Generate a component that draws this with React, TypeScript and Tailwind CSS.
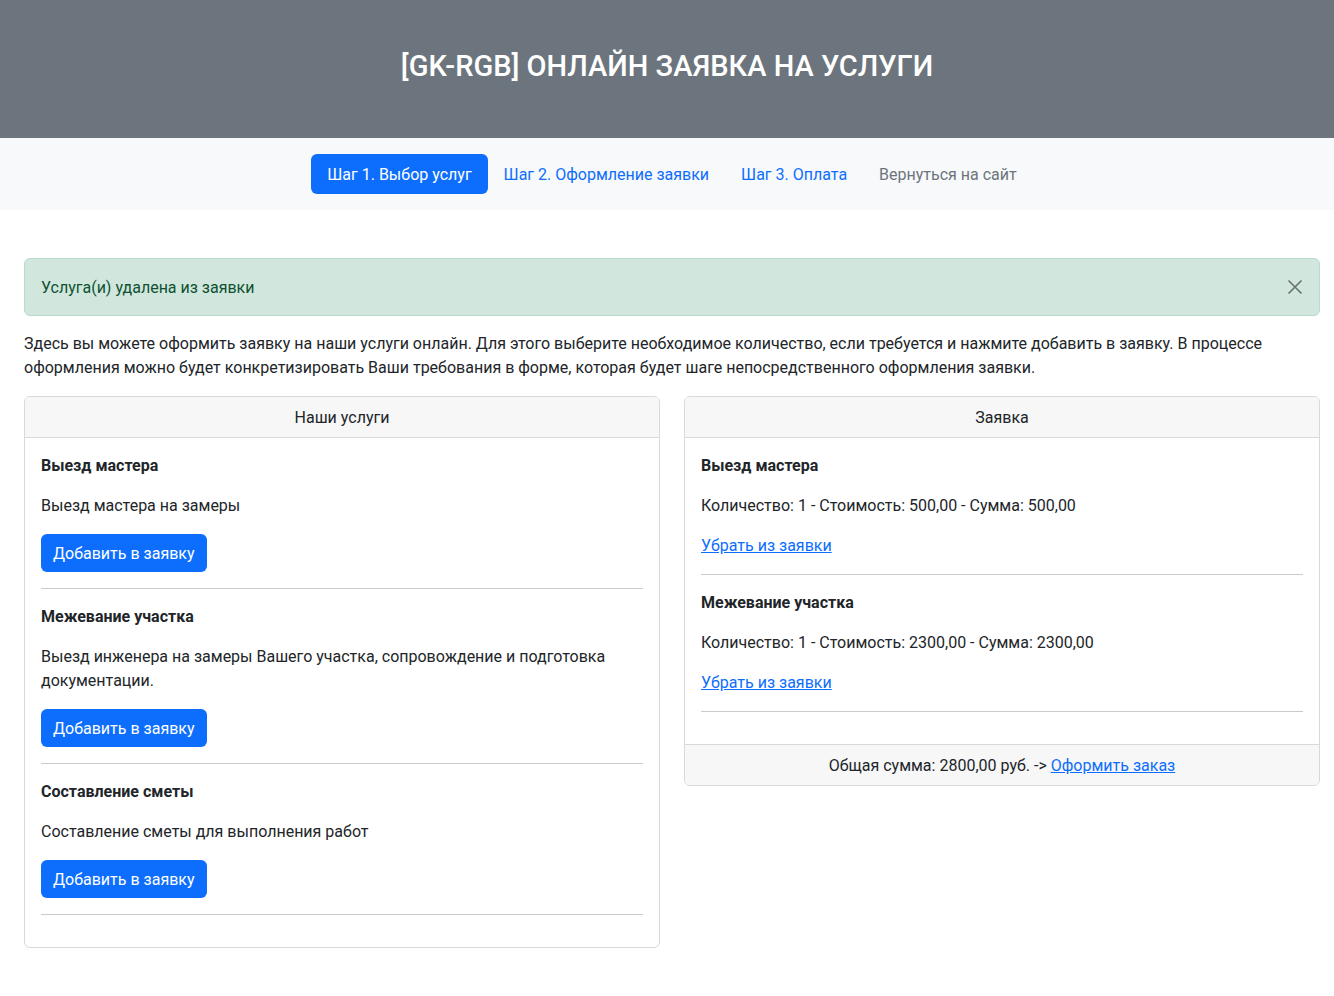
import React from "react";

const services = [
  { title: "Выезд мастера", desc: "Выезд мастера на замеры" },
  {
    title: "Межевание участка",
    desc: "Выезд инженера на замеры Вашего участка, сопровождение и подготовка документации.",
  },
  { title: "Составление сметы", desc: "Составление сметы для выполнения работ" },
];

const order = [
  { title: "Выезд мастера", line: "Количество: 1 - Стоимость: 500,00 - Сумма: 500,00" },
  { title: "Межевание участка", line: "Количество: 1 - Стоимость: 2300,00 - Сумма: 2300,00" },
];

export default function App() {
  return (
    <div
      className="min-h-[996px] bg-white text-[#212529] text-[16px] leading-[24px]"
      style={{ fontFamily: 'Roboto, "Noto Sans", "DejaVu Sans", sans-serif' }}
    >
      <header className="h-[138px] bg-[#6c757d] flex items-center justify-center">
        <h2 className="text-white text-[29px] leading-[38px] font-medium mb-2 pt-[2px]">
          [GK-RGB] ОНЛАЙН ЗАЯВКА НА УСЛУГИ
        </h2>
      </header>

      <nav className="bg-[#f8f9fa] py-4 flex justify-center">
        <ul className="flex pl-[10px]">
          <li>
            <a className="block px-4 pt-[9px] pb-[7px] rounded-[6px] bg-[#0d6efd] text-white">Шаг 1. Выбор услуг</a>
          </li>
          <li>
            <a className="block px-4 pt-[9px] pb-[7px] text-[#0d6efd]">Шаг 2. Оформление заявки</a>
          </li>
          <li>
            <a className="block px-4 pt-[9px] pb-[7px] text-[#0d6efd]">Шаг 3. Оплата</a>
          </li>
          <li>
            <a className="block px-4 pt-[9px] pb-[7px] text-[#6c757d]">Вернуться на сайт</a>
          </li>
        </ul>
      </nav>

      <main className="pl-6 pr-[14px] mt-12">
        <div className="relative border border-[#badbcc] bg-[#d1e7dd] text-[#0f5132] rounded-[6px] pt-[17px] pb-[15px] px-4 pr-12 mb-4">
          Услуга(и) удалена из заявки
          <button className="absolute top-0 right-0 px-4 py-5 opacity-50">
            <svg width="16" height="16" viewBox="0 0 16 16" className="block">
              <path d="M1.5 1.5 L14.5 14.5 M14.5 1.5 L1.5 14.5" stroke="#000" strokeWidth="1.6" fill="none" />
            </svg>
          </button>
        </div>

        <p className="mb-4">
          Здесь вы можете оформить заявку на наши услуги онлайн. Для этого выберите необходимое количество, если требуется и нажмите добавить в заявку. В процессе оформления можно будет конкретизировать Ваши требования в форме, которая будет шаге непосредственного оформления заявки.
        </p>

        <div className="grid grid-cols-2 gap-6 items-start">
          <div className="border border-[#d9d9d9] rounded-[6px] overflow-hidden">
            <div className="bg-[#f7f7f7] border-b border-[#d9d9d9] px-4 pt-[9px] pb-[7px] text-center">Наши услуги</div>
            <div className="p-4">
              {services.map((s) => (
                <div key={s.title}>
                  <div className="font-bold mb-4">{s.title}</div>
                  <p className="mb-4">{s.desc}</p>
                  <button className="bg-[#0d6efd] text-white rounded-[6px] px-3 pt-[8px] pb-[6px] leading-[24px]">
                    Добавить в заявку
                  </button>
                  <hr className="my-4 border-0 border-t border-[#cbcbcb]" />
                </div>
              ))}
            </div>
          </div>

          <div className="border border-[#d9d9d9] rounded-[6px] overflow-hidden">
            <div className="bg-[#f7f7f7] border-b border-[#d9d9d9] px-4 pt-[9px] pb-[7px] text-center">Заявка</div>
            <div className="p-4">
              {order.map((o) => (
                <div key={o.title}>
                  <div className="font-bold mb-4">{o.title}</div>
                  <p className="mb-4">{o.line}</p>
                  <a className="text-[#0d6efd] underline">Убрать из заявки</a>
                  <hr className="my-4 border-0 border-t border-[#cbcbcb]" />
                </div>
              ))}
            </div>
            <div className="bg-[#f7f7f7] border-t border-[#d9d9d9] px-4 pt-[9px] pb-[7px] text-center">
              Общая сумма: 2800,00 руб. -&gt; <a className="text-[#0d6efd] underline">Оформить заказ</a>
            </div>
          </div>
        </div>
      </main>
    </div>
  );
}
